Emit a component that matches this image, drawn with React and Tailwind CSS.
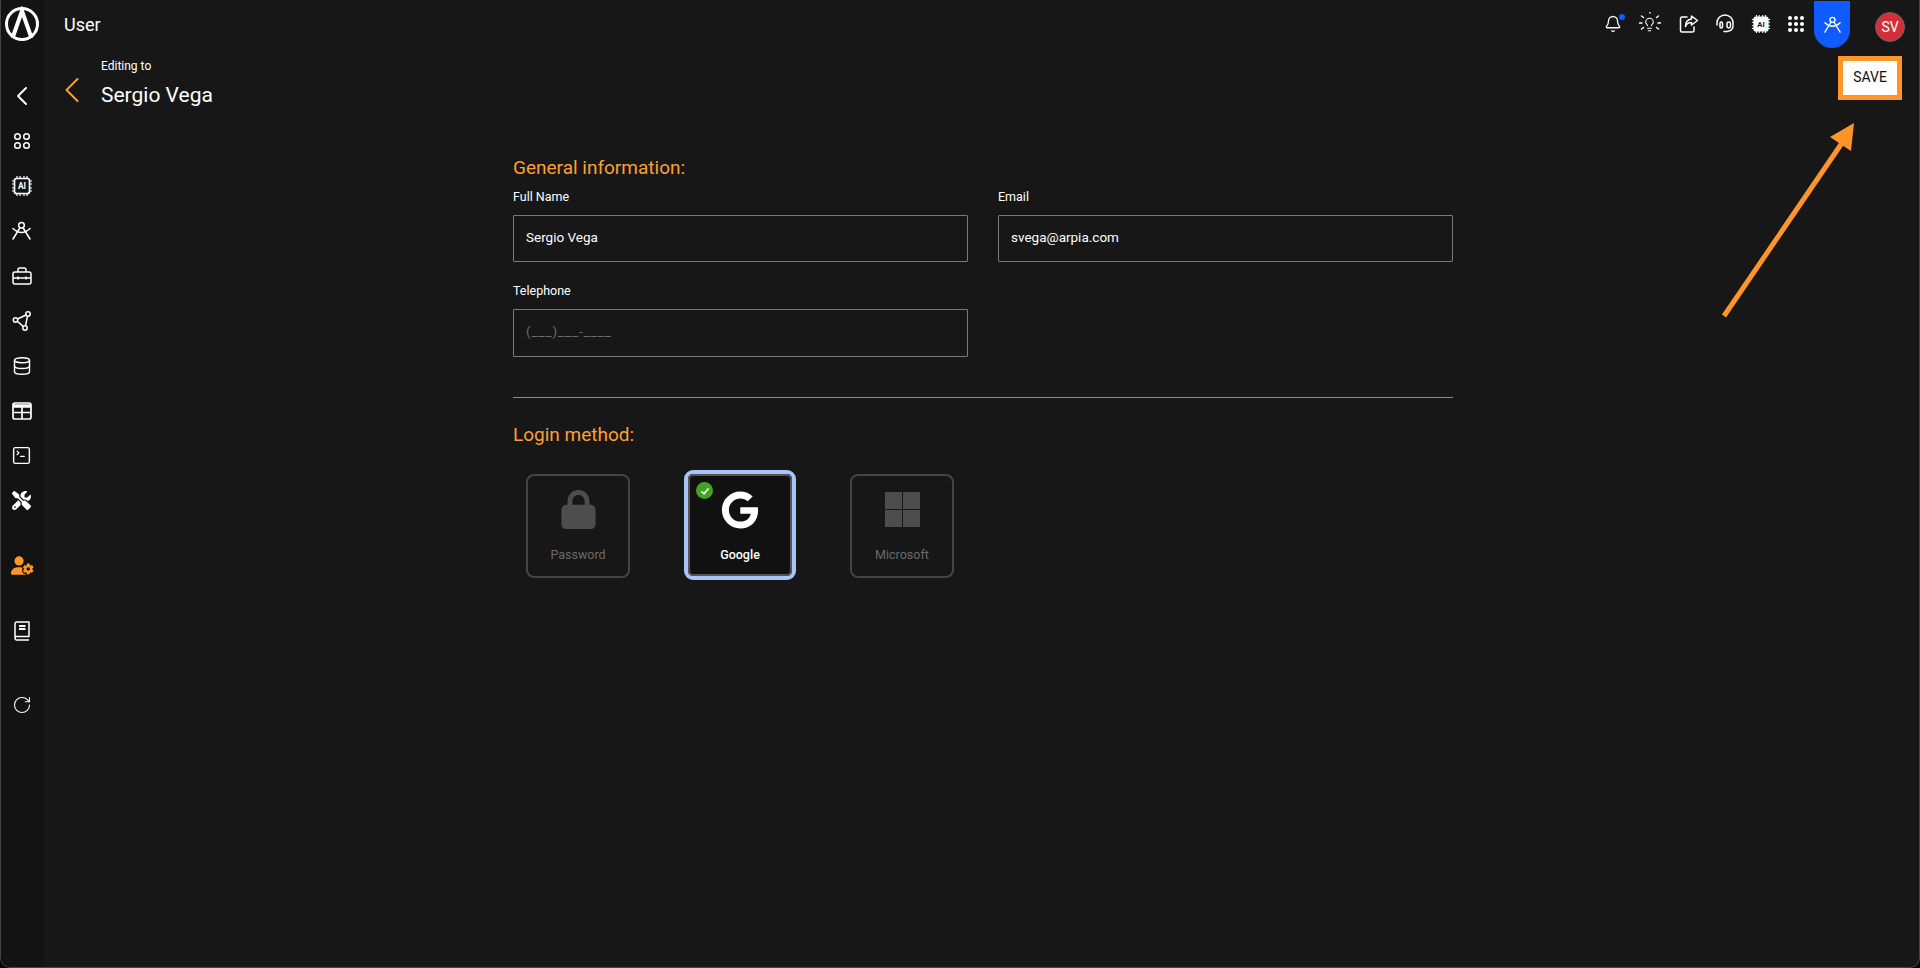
import { Bell, ChevronLeft, Database, Lightbulb, RotateCw, SquareTerminal } from 'lucide-react';
import { FaGoogle, FaLock, FaUserGear, FaScrewdriverWrench } from 'react-icons/fa6';

const ORANGE = '#ff9428';

function Logo() {
  return (
    <svg width="36" height="36" viewBox="0 0 36 36" fill="none">
      <circle cx="18" cy="18" r="15.500" stroke="white" strokeWidth="3" />
      <path d="M8.500 32 L18 5 L27.500 32" stroke="white" strokeWidth="4" />
    </svg>
  );
}

function Apps() {
  return (
    <svg width="18" height="18" viewBox="0 0 18 18" fill="none" stroke="currentColor" strokeWidth="1.500">
      <circle cx="4.500" cy="4.500" r="2.800" />
      <circle cx="13.500" cy="4.500" r="2.800" />
      <circle cx="4.500" cy="13.500" r="2.800" />
      <circle cx="13.500" cy="13.500" r="2.800" />
    </svg>
  );
}

function Chip({ size = 22, filled = false }) {
  return (
    <svg width={size} height={size} viewBox="0 0 22 22" fill="none" stroke="currentColor" strokeWidth="1.700">
      <rect x="3.500" y="3.500" width="15" height="15" rx="2" fill={filled ? 'white' : 'none'} />
      <path strokeWidth="1.200" d="M6 1v2.500M9 1v2.500M13 1v2.500M16 1v2.500M6 18.500V21M9 18.500V21M13 18.500V21M16 18.500V21M1 6h2.500M1 9h2.500M1 13h2.500M1 16h2.500M18.500 6H21M18.500 9H21M18.500 13H21M18.500 16H21" />
      <text x="11" y="14" textAnchor="middle" fontSize="8.500" fontWeight="700" fontFamily="Roboto, sans-serif" stroke="none" fill={filled ? '#171717' : 'white'}>AI</text>
    </svg>
  );
}

// drafting compass, drawn to the reference: open arc crossing both legs
function Compass({ size = 19 }) {
  return (
    <svg width={size} height={size} viewBox="0 0 19 19" fill="none" stroke="currentColor" strokeWidth="1.500" strokeLinecap="round">
      <circle cx="9.500" cy="4.300" r="2.800" />
      <path d="M7.800 7 1 18M11.200 7 18 18" />
      <path d="M1 7.500Q9.500 15.500 18 7.500" />
    </svg>
  );
}

function Toolbox() {
  return (
    <svg width="20" height="18" viewBox="0 0 20 18" fill="none" stroke="currentColor" strokeWidth="1.500" strokeLinejoin="round">
      <rect x="1" y="5" width="18" height="12" rx="2" />
      <path d="M6 5V2.500A1.500 1.500 0 0 1 7.500 1h5A1.500 1.500 0 0 1 14 2.500V5" />
      <path d="M1 11h18M6 9.500v3M14 9.500v3" />
    </svg>
  );
}

function Graph() {
  return (
    <svg width="20" height="20" viewBox="0 0 20 20" fill="none" stroke="currentColor" strokeWidth="1.500">
      <circle cx="3.500" cy="9" r="2.200" />
      <circle cx="16" cy="3" r="2.200" />
      <circle cx="13" cy="17" r="2.200" />
      <path d="M5.500 8 14 4M5.300 10.300 11.300 15.600M15.500 5.200 13.500 14.800" />
    </svg>
  );
}

function TableIcon() {
  return (
    <svg width="20" height="18" viewBox="0 0 20 18" fill="none" stroke="currentColor" strokeWidth="1.700">
      <rect x="1" y="1" width="18" height="16" rx="2" />
      <path d="M1 4h18" strokeWidth="3.500" />
      <path d="M1 10.500h18M10 5v12" />
    </svg>
  );
}

function Manual() {
  return (
    <svg width="18" height="20" viewBox="0 0 18 20" fill="none" stroke="currentColor" strokeWidth="1.500" strokeLinejoin="round">
      <path d="M2 16.500V3a2 2 0 0 1 2-2h12v14.500H3.500A1.800 1.800 0 0 0 2 17.200 1.800 1.800 0 0 0 3.500 19H16" />
      <path d="M6 5h6.500M6 8h6.500" strokeWidth="2" />
    </svg>
  );
}

function ShareBox() {
  return (
    <svg width="20" height="20" viewBox="0 0 20 20" fill="none" stroke="currentColor" strokeWidth="1.500" strokeLinejoin="round" strokeLinecap="round">
      <path d="M8 3H3a1.500 1.500 0 0 0-1.500 1.500v12A1.500 1.500 0 0 0 3 18h10.500a1.500 1.500 0 0 0 1.500-1.500V13" />
      <path d="M12.500 2 18.500 6.500 12.500 11V8.500c-3 0-5 1-6 4 0-4 2-7 6-7.500z" />
    </svg>
  );
}

function BulbRays() {
  return (
    <div className="relative flex h-5 w-5 items-center justify-center">
      <Lightbulb size={15} strokeWidth={1.700} />
      <svg className="absolute -inset-[2px]" width="24" height="24" viewBox="0 0 24 24" fill="none" stroke="currentColor" strokeWidth="1.400" strokeLinecap="round">
        <path d="M1.500 11h2.500M20 11h2.500M3.500 4 5.500 5.500M20.500 4 18.500 5.500M3.500 17 5.500 15.500M20.500 17 18.500 15.500M12 0.500V1" />
      </svg>
    </div>
  );
}

function HeadsetIcon() {
  return (
    <svg width="20" height="20" viewBox="0 0 20 20" fill="none" stroke="currentColor" strokeWidth="1.500" strokeLinecap="round">
      <path d="M2 11V9a8 8 0 0 1 16 0v2" />
      <rect x="5" y="8" width="2.500" height="6" rx="1.200" />
      <rect x="12" y="8" width="3.500" height="6" rx="1.700" />
      <path d="M18 12c0 3-2 5-6 5.500H9" />
    </svg>
  );
}

function GridDots() {
  return (
    <div className="grid grid-cols-3 gap-[2.500px]">
      {Array.from({ length: 9 }).map((_, i) => (
        <span key={i} className="h-[3.500px] w-[3.500px] rounded-full bg-white" />
      ))}
    </div>
  );
}

function Sidebar() {
  return (
    <aside className="flex h-full w-[43px] shrink-0 flex-col items-center bg-[#131313] pr-[2px] text-white">
      <div className="flex h-[48px] w-full items-center justify-center pl-[1px]"><Logo /></div>
      <div className="mt-[25px] flex h-[45px] items-center"><ChevronLeft size={32} strokeWidth={1.500} /></div>
      <div className="flex h-[45px] items-center"><Apps /></div>
      <div className="flex h-[45px] items-center"><Chip /></div>
      <div className="flex h-[45px] items-center"><Compass /></div>
      <div className="flex h-[45px] items-center"><Toolbox /></div>
      <div className="flex h-[45px] items-center"><Graph /></div>
      <div className="flex h-[45px] items-center"><Database size={20} strokeWidth={1.700} /></div>
      <div className="flex h-[45px] items-center"><TableIcon /></div>
      <div className="flex h-[45px] items-center"><SquareTerminal size={21} strokeWidth={1.600} /></div>
      <div className="flex h-[45px] items-center"><FaScrewdriverWrench size={19} /></div>
      <div className="mt-[20px] flex h-[45px] items-center pl-[2px] text-[#ff9428]"><FaUserGear size={23} /></div>
      <div className="mt-[20px] flex h-[45px] items-center"><Manual /></div>
      <div className="mt-[29px] flex h-[45px] items-center"><RotateCw size={20} strokeWidth={1.300} /></div>
    </aside>
  );
}

function TopBar() {
  return (
    <header className="flex h-[48px] shrink-0 items-center pl-[20px] pr-[14px] text-white">
      <span className="text-[18px] text-white">User</span>
      <div className="ml-auto flex items-center">
        <div className="relative flex w-[36px] justify-center">
          <Bell size={18} strokeWidth={1.700} />
          <span className="absolute right-[6px] top-[-1px] h-[6px] w-[6px] rounded-full bg-[#0f5bff]" />
        </div>
        <div className="flex w-[37px] justify-center"><BulbRays /></div>
        <div className="flex w-[38px] justify-center pl-[4px]"><ShareBox /></div>
        <div className="flex w-[37px] justify-center"><HeadsetIcon /></div>
        <div className="flex w-[35px] justify-center"><Chip size={20} filled /></div>
        <div className="flex w-[36px] justify-center"><GridDots /></div>
        <div className="flex h-[47px] w-[36px] items-center justify-center self-start rounded-b-[18px] bg-[#0f5bff]"><Compass size={17} /></div>
        <div className="ml-[25px] mt-[6px] flex h-[30px] w-[30px] items-center justify-center rounded-full border border-[#666] bg-[#d32f36] text-[14px]">SV</div>
      </div>
    </header>
  );
}

function Field({ label, value, placeholder, tall }) {
  return (
    <div className="flex flex-col">
      <label className="text-[12.500px] leading-[18px] text-white">{label}</label>
      <div className={`mt-[9px] flex ${tall ? 'h-[48px]' : 'h-[47px]'} items-center rounded-[1px] border border-[#7a7a7a] px-3 pb-[3px] text-[13.500px] text-white`}>
        {placeholder ? <span className="tracking-[0.9px] text-[#6b6b6b]">{placeholder}</span> : value}
      </div>
    </div>
  );
}

function MethodCard({ label, icon, active }) {
  return (
    <div className={active
      ? 'relative flex h-[110px] w-[112px] flex-col items-center rounded-[9px] border-[4px] border-[#a8c3f5] bg-[#111] text-white outline-2 outline-offset-[-6px] outline-[#555]'
      : 'mt-[2px] flex h-[104px] w-[104px] flex-col items-center rounded-[8px] border-2 border-[#444] text-[#6a6a6a]'}>
      {active && (
        <span className="absolute left-[8px] top-[8px] flex h-[17px] w-[17px] items-center justify-center rounded-full bg-[#43a324]">
          <svg width="10" height="10" viewBox="0 0 10 10" fill="none" stroke="white" strokeWidth="1.600"><path d="M1.500 5.500 4 7.800 8.500 2.500" /></svg>
        </span>
      )}
      <div className={active ? 'mt-[17px] flex h-[38px] items-center' : 'mt-[13px] flex h-[40px] items-center text-[#4d4d4d]'}>{icon}</div>
      <span className={active ? 'mt-[17px] text-[12.500px] font-medium leading-[18px]' : 'mt-[17px] text-[12.500px] leading-[18px]'}>{label}</span>
    </div>
  );
}

function Windows() {
  return (
    <svg width="35" height="35" viewBox="0 0 35 35" fill="currentColor">
      <rect width="17" height="17" />
      <rect x="18" width="17" height="17" />
      <rect y="18" width="17" height="17" />
      <rect x="18" y="18" width="17" height="17" />
    </svg>
  );
}

function SaveArrow() {
  return (
    <svg className="absolute left-[1710px] top-[110px]" width="160" height="220" viewBox="1710 110 160 220" fill="none">
      <path d="M1723 316 1843 140" stroke={ORANGE} strokeWidth="5" />
      <path d="M1853 123 1829 137 1850 151z" fill={ORANGE} />
    </svg>
  );
}

export default function App() {
  return (
    <div className="h-[968px] w-[1920px] bg-black">
      <div className="relative flex h-full w-full overflow-hidden rounded-b-[10px] border-x border-b border-[#444] bg-[#171717] font-['Roboto',sans-serif]">
        <Sidebar />
        <main className="flex min-w-0 flex-1 flex-col">
          <TopBar />
          <div className="relative flex pl-[6px]">
            <div className="mt-[20px] text-[#ff9f30]"><ChevronLeft size={44} strokeWidth={1.100} /></div>
            <div className="ml-[7px] mt-[9px] flex flex-col text-white">
              <span className="text-[12px] leading-[18px]">Editing to</span>
              <span className="mt-[5px] text-[21px] leading-[30px]">Sergio Vega</span>
            </div>
            <button className="absolute right-[17px] top-[8px] h-[44px] w-[64px] border-[5px] border-[#ff9428] bg-white pb-[1px] text-[14px] text-[#111]">SAVE</button>
          </div>
          <div className="ml-[469px] mt-[42px] w-[940px]">
            <h2 className="text-[19px] leading-[28px] text-[#ff9f30]">General information:</h2>
            <div className="mt-[6px] grid grid-cols-[455px_455px] gap-x-[30px] gap-y-[20px]">
              <Field label="Full Name" value="Sergio Vega" />
              <Field label="Email" value="svega@arpia.com" />
              <Field label="Telephone" placeholder="(___)___-____" tall />
            </div>
            <hr className="mt-[40px] border-[#8a8a8a]" />
            <h2 className="mt-[23px] text-[19px] leading-[28px] text-[#ff9f30]">Login method:</h2>
            <div className="mt-[21px] flex items-center pl-[13px]">
              <MethodCard label="Password" icon={<FaLock size={39} />} />
              <div className="ml-[54px]"><MethodCard active label="Google" icon={<FaGoogle size={38} />} /></div>
              <div className="ml-[54px]"><MethodCard label="Microsoft" icon={<Windows />} /></div>
            </div>
          </div>
        </main>
        <SaveArrow />
      </div>
    </div>
  );
}
